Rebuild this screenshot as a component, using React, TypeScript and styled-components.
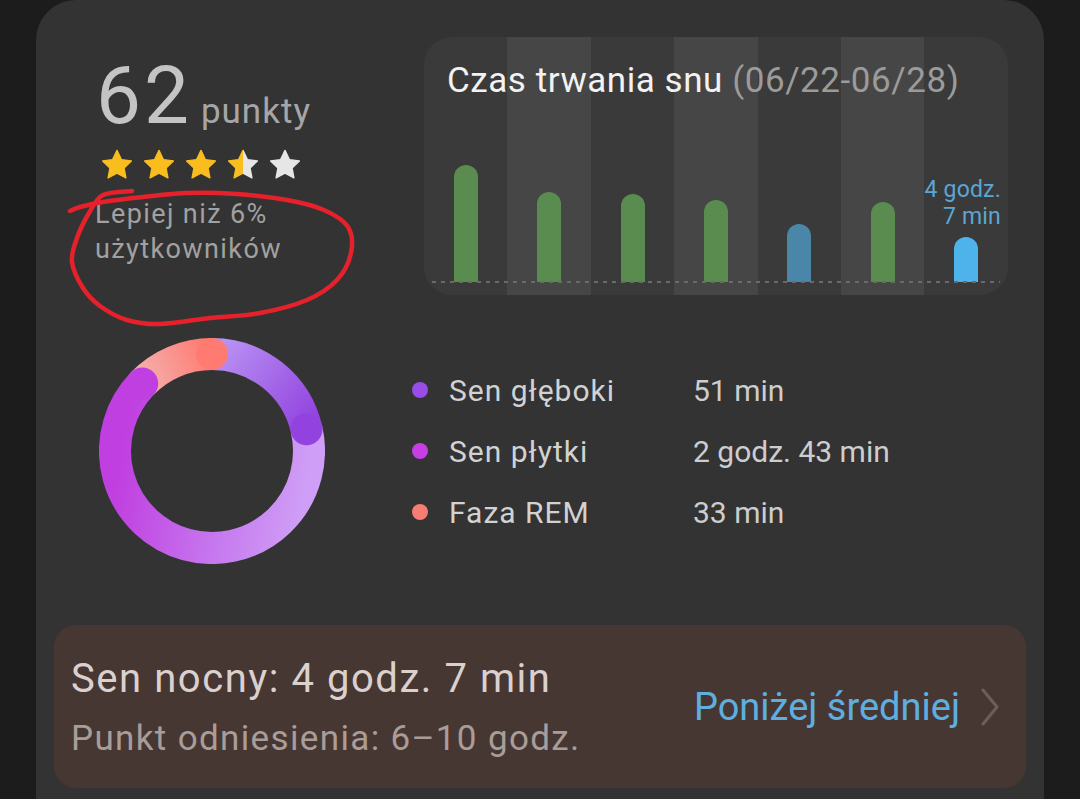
import styled, { createGlobalStyle } from "styled-components"

const GlobalStyle = createGlobalStyle`
    html, body {
        margin: 0;
        background: #1c1c1c;
    }

    body {
        font-family: Roboto, "Noto Sans", "Liberation Sans", sans-serif;
        overflow: hidden;
    }
`

type Bar = { height: number; color: string; label?: string[] }

const bars: Bar[] = [
    { height: 117, color: "#5a8c4f" },
    { height: 90, color: "#5a8c4f" },
    { height: 88, color: "#5a8c4f" },
    { height: 82, color: "#5a8c4f" },
    { height: 58, color: "#4a86a8" },
    { height: 80, color: "#5a8c4f" },
    { height: 45, color: "#4db3ea", label: ["4 godz.", "7 min"] }
]

const stages = [
    { name: "Sen głęboki", value: "51 min", color: "#9a4ce8" },
    { name: "Sen płytki", value: "2 godz. 43 min", color: "#c73ee3" },
    { name: "Faza REM", value: "33 min", color: "#f77c74" }
]

const STAR_PATH = "M12 .9l3.3 6.9 7.5 1-5.5 5.3 1.4 7.5L12 18l-6.7 3.6 1.4-7.5L1.2 8.8l7.5-1z"

const Star = ({ fill }: { fill: string }) => (
    <StarIcon viewBox="0 0 24 23">
        <path d={STAR_PATH} fill={fill} stroke={fill} strokeWidth={1} strokeLinejoin="round" />
    </StarIcon>
)

// donut geometry, angles clockwise from 12 o'clock
const C = 113
const R = 97
const polar = (deg: number) => {
    const a = (deg * Math.PI) / 180
    return { x: C + R * Math.sin(a), y: C - R * Math.cos(a) }
}
const arc = (from: number, to: number) => {
    const s = polar(from)
    const e = polar(to)
    const large = to - from > 180 ? 1 : 0
    return `M ${s.x} ${s.y} A ${R} ${R} 0 ${large} 1 ${e.x} ${e.y}`
}

const DonutChart = () => {
    const deepStart = polar(0)
    const deepEnd = polar(77)
    const lightEnd = polar(314)
    return (
        <DonutSvg viewBox="0 0 226 226">
            <defs>
                <linearGradient id="deep" gradientUnits="userSpaceOnUse" x1={deepStart.x} y1={deepStart.y} x2={deepEnd.x} y2={deepEnd.y}>
                    <stop offset="0" stopColor="#b993f3" />
                    <stop offset="1" stopColor="#9243df" />
                </linearGradient>
                <linearGradient id="light" gradientUnits="userSpaceOnUse" x1="215" y1="100" x2="30" y2="70">
                    <stop offset="0" stopColor="#cf9ef6" />
                    <stop offset="0.45" stopColor="#c676ee" />
                    <stop offset="1" stopColor="#c03fe0" />
                </linearGradient>
                <linearGradient id="rem" gradientUnits="userSpaceOnUse" x1={lightEnd.x} y1={lightEnd.y} x2={deepStart.x} y2={deepStart.y}>
                    <stop offset="0" stopColor="#f4b0ae" />
                    <stop offset="1" stopColor="#ff7a70" />
                </linearGradient>
            </defs>
            <path d={arc(77, 314)} fill="none" stroke="url(#light)" strokeWidth={32} />
            <path d={arc(314, 360)} fill="none" stroke="url(#rem)" strokeWidth={32} />
            <path d={arc(0, 77)} fill="none" stroke="url(#deep)" strokeWidth={32} />
            <circle cx={deepEnd.x} cy={deepEnd.y} r={16} fill="#9243df" />
            <circle cx={lightEnd.x} cy={lightEnd.y} r={16} fill="#c03fe0" />
            <circle cx={deepStart.x} cy={deepStart.y} r={16} fill="#ff7a70" />
        </DonutSvg>
    )
}

// hand drawn marker loop round the ranking text
const loop = [
    [132, 191], [103, 195], [89, 213], [77, 238], [72, 262], [83, 288], [100, 306], [127, 320],
    [160, 324], [210, 318], [260, 313], [307, 300], [337, 280], [351, 253], [348, 227], [324, 210],
    [287, 200], [237, 194], [187, 193], [143, 197], [103, 202], [80, 207], [70, 211]
]

const smoothPath = (pts: number[][]) => {
    let d = `M ${pts[0][0]} ${pts[0][1]}`
    for (let i = 0; i < pts.length - 1; i++) {
        const p0 = pts[i - 1] || pts[i]
        const p1 = pts[i]
        const p2 = pts[i + 1]
        const p3 = pts[i + 2] || p2
        const c1 = [p1[0] + (p2[0] - p0[0]) / 6, p1[1] + (p2[1] - p0[1]) / 6]
        const c2 = [p2[0] - (p3[0] - p1[0]) / 6, p2[1] - (p3[1] - p1[1]) / 6]
        d += ` C ${c1[0]} ${c1[1]} ${c2[0]} ${c2[1]} ${p2[0]} ${p2[1]}`
    }
    return d
}

export default function App() {
    return (
        <>
            <GlobalStyle />
            <Screen>
                <Card>
                    <TopRow>
                        <ScoreColumn>
                            <ScoreLine>
                                <ScoreValue>62</ScoreValue>
                                <ScoreUnit>punkty</ScoreUnit>
                            </ScoreLine>
                            <Stars>
                                <Star fill="#f9bd1e" />
                                <Star fill="#f9bd1e" />
                                <Star fill="#f9bd1e" />
                                <StarIcon viewBox="0 0 24 23">
                                    <defs>
                                        <linearGradient id="halfStar" x1="0" y1="0" x2="1" y2="0">
                                            <stop offset="0.5" stopColor="#f9bd1e" />
                                            <stop offset="0.5" stopColor="#e6e6e6" />
                                        </linearGradient>
                                    </defs>
                                    <path d={STAR_PATH} fill="url(#halfStar)" stroke="url(#halfStar)" strokeWidth={1} strokeLinejoin="round" />
                                </StarIcon>
                                <Star fill="#e6e6e6" />
                            </Stars>
                            <Ranking>
                                Lepiej niż 6%
                                <br />
                                użytkowników
                            </Ranking>
                        </ScoreColumn>
                        <ChartPanel>
                            <Columns>
                                {bars.map((bar, i) => (
                                    <Column key={i} $shaded={i % 2 === 1}>
                                        {bar.label && (
                                            <BarLabel>
                                                {bar.label.map(line => (
                                                    <div key={line}>{line}</div>
                                                ))}
                                            </BarLabel>
                                        )}
                                        <BarFill $color={bar.color} style={{ height: bar.height }} />
                                    </Column>
                                ))}
                            </Columns>
                            <DottedBaseline />
                            <ChartTitle>
                                Czas trwania snu <DateRange>(06/22-06/28)</DateRange>
                            </ChartTitle>
                        </ChartPanel>
                    </TopRow>
                    <StagesRow>
                        <DonutChart />
                        <Legend>
                            {stages.map(stage => (
                                <LegendRow key={stage.name}>
                                    <Dot $color={stage.color} />
                                    <StageName>{stage.name}</StageName>
                                    <StageValue>{stage.value}</StageValue>
                                </LegendRow>
                            ))}
                        </Legend>
                    </StagesRow>
                    <SummaryBox>
                        <SummaryText>
                            <SummaryTitle>Sen nocny: 4 godz. 7 min</SummaryTitle>
                            <SummaryReference>Punkt odniesienia: 6–10 godz.</SummaryReference>
                        </SummaryText>
                        <Verdict>
                            Poniżej średniej
                            <Chevron viewBox="0 0 20 38">
                                <polyline points="3,2 17,19 3,36" fill="none" stroke="#6e5d5a" strokeWidth={3} strokeLinecap="round" strokeLinejoin="round" />
                            </Chevron>
                        </Verdict>
                    </SummaryBox>
                </Card>
                <Annotation viewBox="0 0 1080 799">
                    <path d={smoothPath(loop)} fill="none" stroke="#e5212b" strokeWidth={4.5} strokeLinecap="round" strokeLinejoin="round" />
                </Annotation>
            </Screen>
        </>
    )
}

const Screen = styled.div`
    position: relative;
    height: 799px;
    overflow: hidden;
    padding: 0 36px;
    box-sizing: border-box;
`

const Card = styled.div`
    height: 840px;
    background: #333333;
    border-radius: 40px 40px 0 0;
    padding: 37px 18px 0;
    box-sizing: border-box;
`

const TopRow = styled.div`
    display: flex;
    justify-content: space-between;
    padding-right: 18px;
`

const ScoreColumn = styled.div`
    display: flex;
    flex-direction: column;
    padding-left: 42px;
`

const ScoreLine = styled.div`
    display: flex;
    align-items: baseline;
    gap: 9px;
    margin-top: 19px;
`

const ScoreValue = styled.span`
    font-size: 80px;
    line-height: 80px;
    letter-spacing: 3px;
    color: #c4c4c4;
`

const ScoreUnit = styled.span`
    font-size: 35px;
    letter-spacing: 1px;
    color: #a6a6a6;
`

const Stars = styled.div`
    display: flex;
    gap: 10px;
    margin: 13px 0 0 5px;
`

const StarIcon = styled.svg`
    width: 32px;
    height: 31px;
    display: block;
`

const Ranking = styled.div`
    margin-top: 17px;
    margin-left: -1px;
    font-size: 27px;
    line-height: 35px;
    letter-spacing: 1.4px;
    color: #a1a1a1;
`

const ChartPanel = styled.div`
    display: grid;
    width: 584px;
    height: 258px;
    border-radius: 28px;
    overflow: hidden;
    background: #3a3a3a;

    & > * {
        grid-area: 1 / 1;
    }
`

const Columns = styled.div`
    display: grid;
    grid-template-columns: repeat(7, 1fr);
`

const Column = styled.div<{ $shaded: boolean }>`
    display: flex;
    flex-direction: column;
    justify-content: flex-end;
    align-items: center;
    padding-bottom: 13px;
    background: ${p => (p.$shaded ? "#464646" : "transparent")};
`

const BarFill = styled.div<{ $color: string }>`
    width: 24px;
    border-radius: 12px 12px 0 0;
    background: ${p => p.$color};
`

const BarLabel = styled.div`
    align-self: flex-end;
    margin: 0 7px 7px 0;
    text-align: right;
    white-space: nowrap;
    font-size: 23px;
    line-height: 27px;
    letter-spacing: 0.2px;
    color: #5aa6d5;
`

const DottedBaseline = styled.div`
    align-self: end;
    height: 2px;
    margin: 0 8px 12px 8px;
    background-image: repeating-linear-gradient(to right, #6a6a6a 0 4px, transparent 4px 9px);
`

const ChartTitle = styled.div`
    align-self: start;
    padding: 23px 0 0 23px;
    font-size: 35px;
    line-height: 42px;
    letter-spacing: 0.55px;
    color: #f2f2f2;
`

const DateRange = styled.span`
    color: #9b9b9b;
`

const StagesRow = styled.div`
    display: flex;
    align-items: center;
    margin-top: 43px;
    padding-left: 45px;
`

const DonutSvg = styled.svg`
    width: 226px;
    height: 226px;
    display: block;
`

const Legend = styled.div`
    display: grid;
    grid-auto-rows: 61px;
    margin-left: 87px;
`

const LegendRow = styled.div`
    display: grid;
    grid-template-columns: 16px 223px auto;
    column-gap: 21px;
    align-items: center;
    font-size: 30px;
`

const Dot = styled.span<{ $color: string }>`
    width: 16px;
    height: 16px;
    border-radius: 50%;
    background: ${p => p.$color};
`

const StageName = styled.span`
    letter-spacing: 1px;
    color: #d2d2d2;
`

const StageValue = styled.span`
    color: #cdcdcd;
`

const SummaryBox = styled.div`
    display: flex;
    align-items: center;
    justify-content: space-between;
    height: 163px;
    margin-top: 61px;
    padding: 0 26px 0 17px;
    border-radius: 22px;
    background: #473733;
    box-sizing: border-box;
`

const SummaryText = styled.div`
    display: flex;
    flex-direction: column;
    gap: 15px;
    margin-top: 2px;
`

const SummaryTitle = styled.div`
    font-size: 40px;
    line-height: 48px;
    letter-spacing: 1.55px;
    color: #dad1ce;
`

const SummaryReference = styled.div`
    font-size: 35px;
    line-height: 42px;
    letter-spacing: 1.35px;
    color: #a99d99;
`

const Verdict = styled.div`
    display: flex;
    align-items: center;
    gap: 20px;
    font-size: 38px;
    color: #5eafe1;
`

const Chevron = styled.svg`
    width: 20px;
    height: 38px;
    display: block;
`

const Annotation = styled.svg`
    position: absolute;
    left: 0;
    top: 0;
    width: 1080px;
    height: 799px;
    pointer-events: none;
`
